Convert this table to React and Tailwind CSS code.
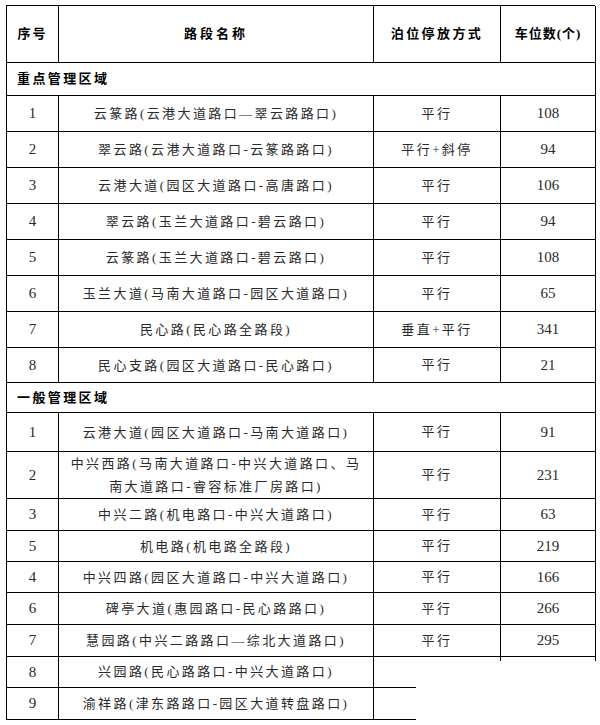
const serif = '"Liberation Serif", "Noto Sans CJK SC", serif';

const groupA = [
  ['1', '云篆路(云港大道路口—翠云路路口)', '平行', '108'],
  ['2', '翠云路(云港大道路口-云篆路路口)', '平行+斜停', '94'],
  ['3', '云港大道(园区大道路口-高唐路口)', '平行', '106'],
  ['4', '翠云路(玉兰大道路口-碧云路口)', '平行', '94'],
  ['5', '云篆路(玉兰大道路口-碧云路口)', '平行', '108'],
  ['6', '玉兰大道(马南大道路口-园区大道路口)', '平行', '65'],
  ['7', '民心路(民心路全路段)', '垂直+平行', '341'],
];

const groupB = [
  ['1', '云港大道(园区大道路口-马南大道路口)', '平行', '91', 'h-[39px]'],
  ['2', null, '平行', '231', 'h-[47px]'],
  ['3', '中兴二路(机电路口-中兴大道路口)', '平行', '63', 'h-[32px]'],
  ['5', '机电路(机电路全路段)', '平行', '219', 'h-[31px]'],
  ['4', '中兴四路(园区大道路口-中兴大道路口)', '平行', '166', 'h-[31px]'],
  ['6', '碑亭大道(惠园路口-民心路路口)', '平行', '266', 'h-[32px]'],
  ['7', '慧园路(中兴二路路口—综北大道路口)', '平行', '295', 'h-[32px]'],
];

const cell = 'flex items-center justify-center border-r border-b border-black text-center';
const body = 'text-[13px] tracking-[2.4px] text-[#2a2a2a]';
const num = 'text-[15px] text-[#2a2a2a]';

function Row({ no, name, mode, count, h = 'h-[36px]' }) {
  return (
    <>
      <div className={`${cell} ${h} ${num}`}>{no}</div>
      <div className={`${cell} ${h} ${body} leading-[23px]`}>{name}</div>
      <div className={`${cell} ${h} ${body}`}>{mode}</div>
      <div className={`${cell} ${h} ${num}`}>{count}</div>
    </>
  );
}

function Section({ label, h }) {
  return (
    <div className={`col-span-4 flex items-center border-r border-b border-black pl-[10px] ${h} text-[13px] font-bold tracking-[2.4px] text-black`}>
      {label}
    </div>
  );
}

function OpenRow({ no, name, h, stub }) {
  return (
    <>
      <div className={`${cell} ${h} ${num}`}>{no}</div>
      <div className={`${cell} ${h} ${body}`}>{name}</div>
      <div className={`flex flex-col justify-between ${h}`}>
        <div className={`self-end w-px h-[4px] ${stub ? 'bg-black' : ''}`} />
        <div className="w-[42px] h-px bg-black" />
      </div>
      <div className={`flex flex-col ${h}`}>
        {stub && <div className="self-end w-px h-[4px] bg-black" />}
      </div>
    </>
  );
}

export default function App() {
  return (
    <div className="w-[600px] h-[725px] bg-white pl-[6px] pt-[5px]" style={{ fontFamily: serif }}>
      <div className="grid grid-cols-[52px_315px_127px_95px] w-[589px] border-l border-t border-black">
        <div className={`${cell} h-[57px] text-[13px] font-bold tracking-[2px] text-black`}>序号</div>
        <div className={`${cell} h-[57px] text-[13px] font-bold tracking-[3px] text-black`}>路段名称</div>
        <div className={`${cell} h-[57px] text-[13px] font-bold tracking-[2.4px] text-black`}>泊位停放方式</div>
        <div className={`${cell} h-[57px] text-[13px] font-bold tracking-[1px] text-black`}>车位数(个)</div>

        <Section label="重点管理区域" h="h-[33px]" />
        {groupA.map(([no, name, mode, count]) => (
          <Row key={'a' + no} no={no} name={name} mode={mode} count={count} />
        ))}
        <Row no="8" name="民心支路(园区大道路口-民心路口)" mode="平行" count="21" h="h-[35px]" />

        <Section label="一般管理区域" h="h-[30px]" />
        {groupB.map(([no, name, mode, count, h]) => (
          <Row
            key={'b' + no}
            no={no}
            name={name ?? (<>中兴西路(马南大道路口-中兴大道路口、马<br />南大道路口-睿容标准厂房路口)</>)}
            mode={mode}
            count={count}
            h={h}
          />
        ))}
        <OpenRow no="8" name="兴园路(民心路路口-中兴大道路口)" h="h-[31px]" stub />
        <OpenRow no="9" name="渝祥路(津东路路口-园区大道转盘路口)" h="h-[32px]" />
      </div>
    </div>
  );
}
